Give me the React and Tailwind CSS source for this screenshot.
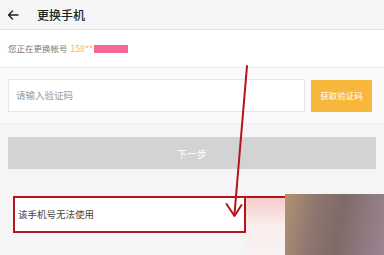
const cjk = { fontFamily: '"Noto Sans CJK SC", "Noto Sans", sans-serif' };

const BackArrow = () => (
  <svg width="12" height="12" viewBox="0 0 12 12" fill="none" stroke="#222" strokeWidth="1.4" strokeLinecap="round" strokeLinejoin="round">
    <path d="M11 6H1.5M5.5 2L1.5 6l4 4" />
  </svg>
);

export default function App() {
  return (
    <div className="relative w-[384px] h-[255px] overflow-hidden bg-[#f5f5f5]" style={cjk}>
      {/* header */}
      <div className="h-[30px] flex items-center bg-[#f6f6f6] border-b border-[#e2e2e2] pl-[7px]">
        <BackArrow />
        <span className="ml-[18px] text-[12px] font-medium text-[#222] leading-none">更换手机</span>
      </div>

      {/* account row */}
      <div className="h-[38px] bg-white flex items-center px-[8px] border-b border-[#ececec]">
        <span className="text-[8.5px] text-[#777] leading-none">您正在更换帐号</span>
        <span className="ml-[3px] text-[8.5px] text-[#f3b94a] leading-none">158**</span>
        <span className="w-[34px] h-[8px] bg-[#f3669a] ml-[1px]" />
      </div>

      {/* code input */}
      <div className="bg-[#fafafa] flex items-center gap-[6px] px-[8px] pt-[11px] pb-[11px] border-b border-[#efefef]">
        <div className="w-[297px] h-[33px] bg-white border border-[#e6e6e6] flex items-center px-[7px]">
          <span className="text-[9.5px] text-[#999]">请输入验证码</span>
        </div>
        <div className="w-[61px] h-[32px] bg-[#f7b73d] flex items-center justify-center">
          <span className="text-[8.5px] text-white">获取验证码</span>
        </div>
      </div>

      {/* next */}
      <div className="px-[8px] pt-[13px]">
        <div className="h-[32px] bg-[#d3d3d3] flex items-center justify-center">
          <span className="text-[10px] text-white">下一步</span>
        </div>
      </div>

      {/* highlighted row */}
      <div className="pl-[13px] pt-[27px]">
        <div className="w-[233px] h-[37px] bg-white border-2 border-[#b5141c] flex items-center px-[3px]">
          <span className="text-[9.5px] text-[#444]">该手机号无法使用</span>
        </div>
      </div>

      {/* annotation line extension + blur */}
      <div className="absolute left-[246px] top-[196px] w-[40px] h-[2px] bg-[#b5141c]" />
      <div className="absolute left-[246px] top-[198px] w-[40px] h-[57px] bg-gradient-to-b from-[#f4cccc] via-[#fbeeee] to-[#f7f2f2]" />
      <div className="absolute left-[285px] top-[194px] w-[99px] h-[61px] bg-[linear-gradient(100deg,#b29274_0%,#8d766f_30%,#7f6a68_55%,#8e7a80_80%,#9a8492_100%)]" />

      {/* arrow */}
      <svg className="absolute left-0 top-0" width="384" height="255" viewBox="0 0 384 255" fill="none">
        <path d="M247 66L234.5 214" stroke="#b5141c" strokeWidth="2" strokeLinecap="round" />
        <path d="M226.5 204L234.5 216L241.5 205" stroke="#b5141c" strokeWidth="2" strokeLinecap="round" strokeLinejoin="round" />
      </svg>
    </div>
  );
}
